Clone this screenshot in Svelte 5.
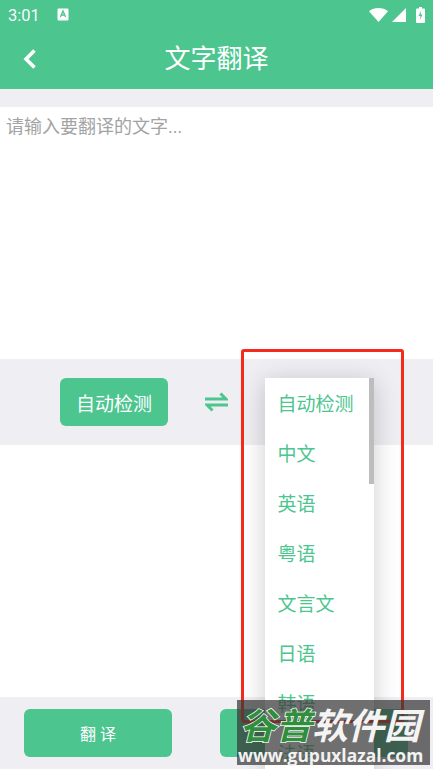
<script>
  const langs = ['自动检测', '中文', '英语', '粤语', '文言文', '日语', '韩语', '法语'];
</script>

<div class="page">
  <header class="head">
    <div class="status">
      <span class="time">3:01</span>
      <svg class="a-icon" width="12" height="13" viewBox="0 0 12 13"><path d="M1.500 0.500h9a1 1 0 0 1 1 1v10a1 1 0 0 1-1 1h-9a1 1 0 0 1-1-1v-10a1 1 0 0 1 1-1z" fill="#fff"/><path d="M3.400 9 6 3l2.600 6M4.300 7h3.400" fill="none" stroke="#4cc58f" stroke-width="1.300"/></svg>
      <span class="spacer"></span>
      <svg width="19" height="14" viewBox="0 0 19 14"><path d="M0 3.200C5.400-1 13.600-1 19 3.200L9.500 14z" fill="#fff"/></svg>
      <svg class="sig" width="14" height="14" viewBox="0 0 14 14"><path d="M14 0v14H0z" fill="#fff"/></svg>
      <svg class="bat" width="9" height="16" viewBox="0 0 9 16"><path d="M3 0h3v1.500h2a1 1 0 0 1 1 1V15a1 1 0 0 1-1 1H1a1 1 0 0 1-1-1V2.500a1 1 0 0 1 1-1h2z" fill="#fff"/><path d="M5.200 3.500 2.500 9h2L3.800 13l2.800-5.500h-2z" fill="#4cc58f"/></svg>
    </div>
    <div class="bar">
      <svg class="back" width="14" height="22" viewBox="0 0 14 22"><path d="M11.500 2.500 3 11l8.500 8.500" fill="none" stroke="#fff" stroke-width="3.600"/></svg>
      <h1>文字翻译</h1>
    </div>
  </header>

  <div class="strip"></div>
  <div class="pane input">请输入要翻译的文字...</div>

  <div class="langs">
    <button class="btn lang">自动检测</button>
    <svg class="swap" width="23" height="20" viewBox="0 0 23 20"><path d="M0 7h21L15.500 1.500M23 13H2l5.500 5.500" fill="none" stroke="#4cc58f" stroke-width="3"/></svg>
  </div>

  <div class="pane"></div>

  <footer class="foot">
    <button class="btn small one">翻 译</button>
    <button class="btn small two"></button>
  </footer>

  <div class="menu">
    {#each langs as l}
      <div class="item">{l}</div>
    {/each}
    <div class="thumb"></div>
  </div>

  <div class="redbox"></div>

  <div class="mark">
    <div class="cn"><span class="g">谷普</span><span class="w">软件园</span></div>
    <div class="url">www.gupuxlazal.com</div>
  </div>
</div>

<style>
  :global(body) { margin: 0; }
  .page {
    position: relative;
    width: 433px;
    height: 769px;
    overflow: hidden;
    background: #fff;
    display: flex;
    flex-direction: column;
    font-family: Roboto, "Noto Sans CJK SC", sans-serif;
  }
  .head { background: #4cc58f; height: 89px; flex: none; color: #fff; }
  .status {
    height: 30px;
    display: flex;
    align-items: center;
    padding: 0 8px 0 8px;
  }
  .time { font-size: 16.500px; width: 49px; opacity: .95; }
  .a-icon { margin-top: -1px; }
  .spacer { flex: 1; }
  .sig { margin: 0 10px 0 4px; }
  .bar { position: relative; height: 59px; display: flex; align-items: center; justify-content: center; }
  .bar h1 { margin: -1px 0 0; font-size: 26px; font-weight: 400; line-height: 1; }
  .back { position: absolute; left: 23px; top: 18px; }
  .strip { height: 18px; flex: none; background: #eeeef3; }
  .pane { height: 252px; flex: none; background: #fff; box-sizing: border-box; }
  .input { padding: 8px 6px; font-size: 18px; line-height: 24px; color: #a3a3a3; }
  .langs {
    height: 86px;
    flex: none;
    background: #eeeef3;
    display: flex;
    align-items: center;
    padding-left: 60px;
    box-sizing: border-box;
  }
  .btn {
    border: 0;
    padding: 0;
    background: #4cc58f;
    color: #fff;
    font-family: inherit;
    border-radius: 6px;
  }
  .lang { width: 108px; height: 48px; font-size: 19px; }
  .swap { margin-left: 37px; }
  .foot {
    height: 72px;
    flex: none;
    background: #eeeef3;
    display: flex;
    align-items: center;
    padding-left: 24px;
    box-sizing: border-box;
  }
  .small { height: 48px; font-size: 16px; }
  .one { width: 148px; }
  .two { width: 188px; margin-left: 48px; }
  .menu {
    position: absolute;
    left: 265px;
    top: 378px;
    width: 109px;
    height: 391px;
    background: #fff;
    box-shadow: 0 4px 24px rgba(0, 0, 0, .2);
    overflow: hidden;
  }
  .item {
    height: 50px;
    box-sizing: border-box;
    padding: 0 0 2px 12.500px;
    display: flex;
    align-items: center;
    font-size: 19px;
    color: #4cc58f;
  }
  .thumb {
    position: absolute;
    right: 0;
    top: 0;
    width: 5px;
    height: 106px;
    background: #bdbdbd;
  }
  .redbox {
    position: absolute;
    left: 241px;
    top: 349px;
    width: 163px;
    height: 374px;
    box-sizing: border-box;
    border: 3px solid #f5291c;
    border-radius: 3px;
  }
  .mark {
    position: absolute;
    left: 237px;
    top: 700px;
    width: 193px;
    height: 65px;
    background: rgba(55, 55, 55, .72);
  }
  .cn {
    height: 45px;
    padding-left: 3px;
    font-size: 36px;
    line-height: 46px;
    font-weight: 700;
    font-style: italic;
    white-space: nowrap;
    font-family: "Noto Sans CJK SC", sans-serif;
  }
  .g { color: #2f8f3c; -webkit-text-stroke: 1.500px #fff; paint-order: stroke fill; }
  .w { color: #f4f4f4; }
  .url {
    padding-left: 1px;
    font-family: "Open Sans", sans-serif;
    font-size: 17.400px;
    line-height: 20px;
    font-weight: 700;
    color: #f2f2f2;
    white-space: nowrap;
  }
</style>
